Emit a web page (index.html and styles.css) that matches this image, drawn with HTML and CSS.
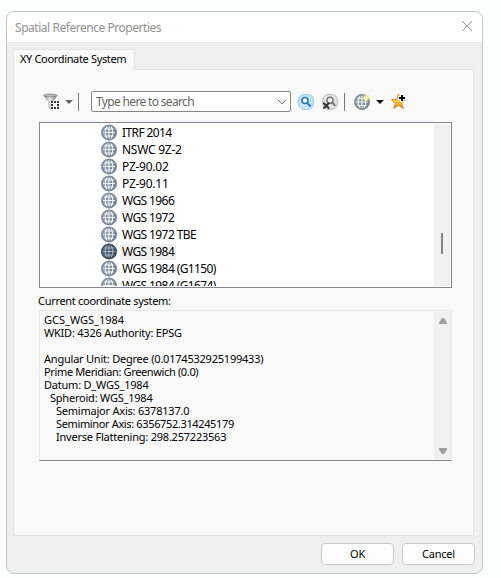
FILE: index.html
```html
<!DOCTYPE html>
<html lang="en">
<head>
<meta charset="utf-8">
<title>Spatial Reference Properties</title>
<link rel="stylesheet" href="styles.css">
</head>
<body>
<svg class="defs" width="0" height="0" aria-hidden="true">
  <defs>
    <linearGradient id="steel" x1="0" y1="0" x2="1" y2="1"><stop offset="0" stop-color="#a3adb9"/><stop offset="1" stop-color="#69788a"/></linearGradient>
    <linearGradient id="dark" x1="0" y1="0" x2="1" y2="1"><stop offset="0" stop-color="#657587"/><stop offset="1" stop-color="#2f4052"/></linearGradient>
    <linearGradient id="metal" x1="0" y1="0" x2="1" y2="0"><stop offset="0" stop-color="#888"/><stop offset=".45" stop-color="#eee"/><stop offset="1" stop-color="#777"/></linearGradient>
    <linearGradient id="gold" x1="0" y1="0" x2="0" y2="1"><stop offset="0" stop-color="#ffe66b"/><stop offset=".5" stop-color="#fdc83a"/><stop offset="1" stop-color="#e98a1d"/></linearGradient>
    <g id="grid" fill="none">
      <path d="M8 2v12M2 8h12M3.4 4.5h9.2M3.4 11.5h9.2M6 2.2C3.6 5.5 3.6 10.5 6 13.8M10 2.2c2.4 3.3 2.4 8.3 0 11.6"/>
    </g>
    <symbol id="globe" viewBox="0 0 16 16">
      <circle cx="8" cy="8" r="7.9" fill="url(#steel)"/><use href="#grid" stroke="#eff3f7" stroke-width="1.15"/>
      <circle cx="8" cy="8" r="7.2" fill="none" stroke="#7d8a99" stroke-opacity=".75" stroke-width="1.3"/>
    </symbol>
    <symbol id="globe-dark" viewBox="0 0 16 16">
      <circle cx="8" cy="8" r="7.9" fill="url(#dark)"/><use href="#grid" stroke="#aebbc8" stroke-width=".9"/>
      <circle cx="8" cy="8" r="7.2" fill="none" stroke="#3f5164" stroke-opacity=".8" stroke-width="1.3"/>
    </symbol>
  </defs>
</svg>
<main class="dialog">
  <header class="titlebar"><h1>Spatial Reference Properties</h1>
    <svg class="close" viewBox="0 0 12 12"><path d="M1 1l10 10M11 1L1 11"/></svg>
  </header>
  <div class="tab"><span>XY Coordinate System</span></div>
  <section class="panel">
    <div class="toolbar">
      <svg class="filter" width="17" height="18" viewBox="0 0 17 18">
        <path d="M.6 2.5L6 8.5v6L9.5 17V8.5L14 2.5z" fill="url(#metal)" stroke="#777" stroke-width=".6"/>
        <ellipse cx="7.3" cy="2.5" rx="6.7" ry="1.5" fill="#bbb" stroke="#777" stroke-width=".7"/>
        <path d="M8 8h9v9H8z" fill="#f9f9f9"/>
        <path d="M8 9h8M8 15h8" stroke="#333" stroke-width="2" stroke-dasharray="2 1" fill="none"/>
        <path d="M8 12h2M14 12h2" stroke="#333" stroke-width="2"/>
      </svg>
      <svg class="caret" width="8" height="4" viewBox="0 0 8 4"><path d="M0 0h8L4 4z" fill="#666"/></svg>
      <i class="sep first"></i>
      <div class="search"><span>Type here to search</span>
        <svg width="10" height="6" viewBox="0 0 10 6"><path d="M1 .8l4 4 4-4" fill="none" stroke="#555"/></svg>
      </div>
      <svg class="find" width="16" height="16" viewBox="0 0 16 16">
        <rect x=".5" y=".5" width="15" height="15" rx="6" fill="#c6e4f8" stroke="#9cc7e5"/>
        <circle cx="7" cy="6.5" r="3" fill="#f5fcff" stroke="#2678b8" stroke-width="1.6"/><path d="M9.2 8.9l3.5 3.6" stroke="#2678b8" stroke-width="2"/>
      </svg>
      <svg class="clear" width="16" height="16" viewBox="0 0 16 16">
        <rect x=".5" y=".5" width="15" height="15" rx="6" fill="#e2e2e2" stroke="#bbb"/>
        <circle cx="8" cy="6.2" r="3" fill="#f3f3f3" stroke="#777" stroke-width="1.5"/><path d="M10.3 8.5l3 3.3" stroke="#777" stroke-width="2"/>
        <path d="M1.4 8.8l5.8 5.8M7.2 8.8l-5.8 5.8" stroke="#333" stroke-width="2"/>
      </svg>
      <i class="sep second"></i>
      <svg class="world" width="17" height="17" viewBox="0 0 17 17"><use href="#globe" x="0" y="1" width="16" height="16"/>
        <path d="M12 .5l.9 2.5 2.2-1-1 2.2 2.4.8-2.4.9 1 2.2-2.2-1.1-.9 2.4-.9-2.4-2.2 1.1L9.900 5.900 7.500 5l2.400-.8-1-2.200 2.200 1z" fill="#eee282"/><circle cx="12" cy="5" r="1.7" fill="#fffce0"/>
      </svg>
      <svg class="caret black" width="8" height="4" viewBox="0 0 8 4"><path d="M0 0h8L4 4z" fill="#111"/></svg>
      <svg class="star" width="16" height="17" viewBox="0 0 16 17">
        <path d="M7.5 1l1.900 5.300 5.700.1-4.500 3.600 1.800 5.600-4.900-3.200-4.800 3.200 1.700-5.600L.3 6.600l5.400-.2z" fill="url(#gold)" stroke="#c77a24" stroke-width=".8"/>
        <path d="M11 1v8M7 5h8" stroke="#fff" stroke-width="4"/><path d="M11 2v6M8 5h6" stroke="#000" stroke-width="2"/>
      </svg>
    </div>
    <div class="tree">
      <ul>
        <li><svg><use href="#globe"/></svg><span>ITRF 2014</span></li>
        <li><svg><use href="#globe"/></svg><span class="wide">NSWC 9Z-2</span></li>
        <li><svg><use href="#globe"/></svg><span class="wide">PZ-90.02</span></li>
        <li><svg><use href="#globe"/></svg><span class="wide">PZ-90.11</span></li>
        <li><svg><use href="#globe"/></svg><span>WGS 1966</span></li>
        <li><svg><use href="#globe"/></svg><span>WGS 1972</span></li>
        <li><svg><use href="#globe"/></svg><span>WGS 1972 TBE</span></li>
        <li><svg><use href="#globe-dark"/></svg><span class="selected">WGS 1984</span></li>
        <li><svg><use href="#globe"/></svg><span>WGS 1984 (G1150)</span></li>
        <li><svg><use href="#globe"/></svg><span>WGS 1984 (G1674)</span></li>
      </ul>
      <div class="rail"><i></i></div>
    </div>
    <div class="caption">Current coordinate system:</div>
    <div class="details">
      <div class="info"><p class="loose">GCS_WGS_1984</p><p>WKID: 4326 Authority: EPSG</p><p>&nbsp;</p><p>Angular Unit: Degree (0.0174532925199433)</p><p class="tight">Prime Meridian: Greenwich (0.0)</p><p>Datum: D_WGS_1984</p><p class="in1">Spheroid: WGS_1984</p><p class="in2">Semimajor Axis: 6378137.0</p><p class="in2 tight">Semiminor Axis: 6356752.314245179</p><p class="in2">Inverse Flattening: 298.257223563</p></div>
      <div class="scroll"><svg width="8" height="6" viewBox="0 0 8 6"><path d="M0 6V4.500L3 0h2l3 4.500V6z"/></svg><svg width="8" height="6" viewBox="0 0 8 6"><path d="M0 0v1.500L3 6h2l3-4.500V0z"/></svg></div>
    </div>
  </section>
  <footer><button>OK</button><button>Cancel</button></footer>
</main>
</body>
</html>
```

FILE: styles.css
```css
* { box-sizing: border-box; }
body { margin: 0; padding: 11px 0 0 6px; background: #fdfefe; font-family: "Noto Sans", sans-serif; font-size: 11px; color: #000; overflow: hidden; }
svg { display: block; flex: none; }
.defs { position: absolute; }
.dialog { width: 477px; height: 563px; background: #efefef; border: 1px solid #c0c4c3; border-radius: 8px; overflow: hidden; display: flex; flex-direction: column; }
.titlebar { height: 30px; flex: none; display: flex; justify-content: space-between; align-items: center; background: #fff; padding: 0 9px 0 8px; }
h1 { margin: 0; font-size: 12px; font-weight: 400; color: #919191; letter-spacing: -.46px; white-space: nowrap; }
.close { width: 12px; height: 12px; margin-top: -2px; fill: none; stroke: #999; stroke-width: 1; }
.tab { width: 122px; height: 21px; margin: 7px 0 -1px 6px; position: relative; z-index: 1; flex: none; background: #f9f9f9; border: 1px solid #e3e3e3; border-bottom: 0; padding-left: 6px; line-height: 18px; white-space: nowrap; letter-spacing: -.34px; }
.panel { width: 461px; height: 467px; margin-left: 6px; flex: none; border: 1px solid #e3e3e3; background: #f9f9f9; padding: 20px 21px 0 25px; }
.toolbar { height: 23px; display: flex; align-items: center; }
.filter { margin-left: 4px; }
.caret { margin-left: 5px; }
.sep { width: 1px; height: 18px; background: #777; flex: none; }
.first { margin-left: 5px; }
.search { width: 200px; height: 21px; margin-left: 12px; flex: none; border: 1px solid #858585; border-radius: 2px; background: #fff; display: flex; align-items: center; justify-content: space-between; padding: 0 3px 0 4px; color: #666; font-size: 12px; letter-spacing: -.66px; line-height: 18px; white-space: nowrap; }
.find { margin-left: 7px; }
.clear { margin-left: 8px; }
.second { margin-left: 6px; }
.world { margin-left: 9px; }
.star { margin-left: 7px; }
.tree { width: 413px; height: 166px; margin-top: 9px; background: #fff; border: 1px solid #838690; display: flex; justify-content: space-between; overflow: hidden; padding: 1px; }
ul { list-style: none; margin: 0; padding: 0 0 0 60px; height: 162px; overflow: hidden; }
li { display: flex; height: 17px; align-items: center; font-size: 12px; letter-spacing: -.6px; white-space: nowrap; }
li svg { width: 16px; height: 17px; }
li span { margin-left: 3px; padding: 0 2px; line-height: 16px; height: 16px; }
li .wide { letter-spacing: -.25px; }
.selected { background: #f0f0f0; }
.rail { width: 16px; background: #f0f0f0; padding: 109px 0 0 7px; }
.rail i { display: block; width: 2px; height: 21px; background: #858585; }
.caption { height: 22px; line-height: 25px; margin-left: -1px; white-space: nowrap; letter-spacing: -.3px; }
.details { width: 413px; height: 151px; border: 1px solid #e8e8e8; border-bottom-color: #858585; display: flex; justify-content: space-between; padding: 1px 0; }
.info { padding: 1px 0 0 4px; }
p { margin: 0; height: 13px; line-height: 13px; white-space: nowrap; letter-spacing: -.22px; }
.loose { letter-spacing: 0; }
.tight { letter-spacing: -.36px; }
.in1 { padding-left: 6px; }
.in2 { padding-left: 12px; }
.scroll { width: 17px; background: #f0f0f0; display: flex; flex-direction: column; justify-content: space-between; align-items: center; padding: 6px 0 5px; fill: #a0a0a0; }
footer { display: flex; justify-content: flex-end; gap: 8px; padding: 7px 7px 0 0; }
button { width: 73px; height: 22px; border: 1px solid #c9c9c9; border-radius: 4px; background: #fdfdfd; padding: 0; font: 11px/18px "Noto Sans", sans-serif; letter-spacing: -.2px; color: #000; }
```
